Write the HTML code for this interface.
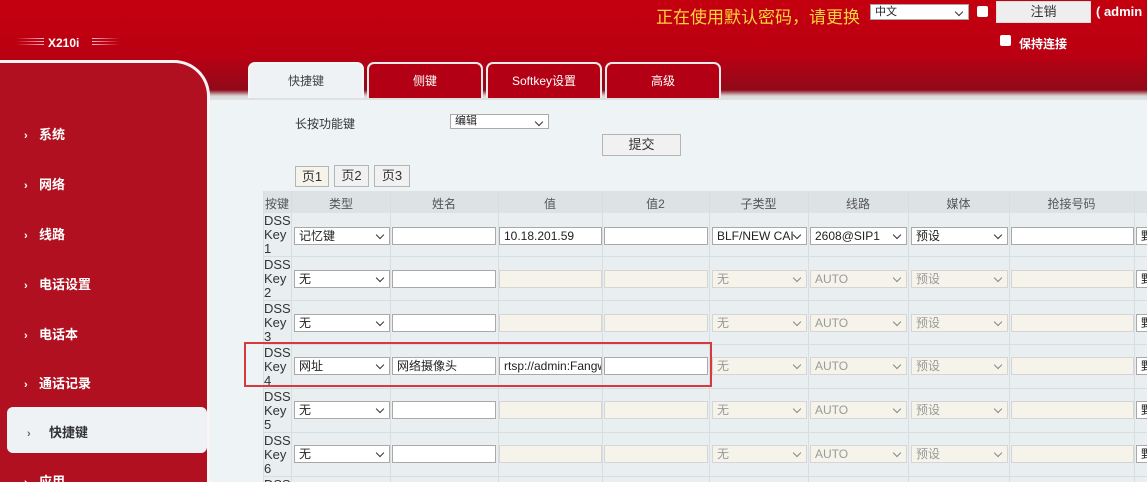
<!DOCTYPE html>
<html><head><meta charset="utf-8"><style>
*{margin:0;padding:0;box-sizing:border-box}
html,body{width:1147px;height:482px;overflow:hidden}
body{position:relative;background:#eef3f5;font-family:"Liberation Sans","Noto Sans CJK SC",sans-serif;font-size:13px;color:#333}
.a{position:absolute}
#hdr{left:0;top:0;width:1147px;height:100px;background:linear-gradient(180deg,#c4000f 0%,#ba0012 55%,#900a1a 90%,#d9d9d9 96%,#dfe3e5 100%)}
.tab{height:36px;border:2px solid #f3e9ea;border-bottom:none;border-radius:7px 7px 0 0;background:#b30014;color:#fff;text-align:center;line-height:34px;font-size:12px}
.side{left:-3px;top:60px;width:213px;height:440px;background:#b0101f;border:3px solid #fbf4f4;border-left:none;border-radius:0 36px 0 0}
.mi{left:24px;color:#fff;font-weight:bold;font-size:13px}
.mi b{display:inline-block;width:15px;font-size:11px}
.sel,.inp{position:absolute;height:18px;border:1px solid #a9a9a9;background:#fff;font-size:12px;line-height:16px;padding-left:4px;color:#222;white-space:nowrap;overflow:hidden}
.sel:after{content:"";position:absolute;right:6px;top:4px;width:5px;height:5px;border-right:1.5px solid #333;border-bottom:1.5px solid #333;transform:rotate(45deg)}
.dis{background:#f5f3ea;border-color:#d5d5d5;color:#999}
.dis:after{border-color:#888}
.vl{position:absolute;top:191px;width:1px;height:291px;background:#d8dde0}
.hl{position:absolute;left:263px;width:884px;height:1px;background:#d8dde0}
.th{position:absolute;top:195px;font-size:12px;color:#555;text-align:center}
.key{position:absolute;left:264px;font-size:13px;line-height:14px;color:#333}
.btn{position:absolute;background:#f1f1f1;border:1px solid #b5b5b5;text-align:center;font-size:13px;color:#333}
.str{position:absolute;top:38px;width:28px;height:8px;background:repeating-linear-gradient(180deg,rgba(255,255,255,.75) 0 1px,transparent 1px 3px)}
</style></head><body>
<div id="hdr" class="a"></div>
<div class="str" style="left:16px;-webkit-mask:linear-gradient(90deg,transparent,#000);mask:linear-gradient(90deg,transparent,#000)"></div>
<div class="a" style="left:48px;top:36px;color:#fff;font-weight:bold;font-size:12px">X210i</div>
<div class="str" style="left:92px;-webkit-mask:linear-gradient(90deg,#000,transparent);mask:linear-gradient(90deg,#000,transparent)"></div>
<div class="a" style="left:656px;top:3px;color:#ffd23c;font-size:17px">正在使用默认密码，请更换</div>
<div class="sel" style="left:870px;top:4px;width:99px;height:16px;font-size:11px;line-height:14px">中文</div>
<div class="a" style="left:977px;top:6px;width:11px;height:11px;background:#fff;border-radius:2px"></div>
<div class="btn" style="left:996px;top:1px;width:95px;height:22px;line-height:20px;background:#eeeeee;border-color:#ddd">注销</div>
<div class="a" style="left:1096px;top:4px;color:#fff;font-weight:bold;font-size:13px">( admin</div>
<div class="a" style="left:1000px;top:35px;width:11px;height:11px;background:#fff;border-radius:2px"></div>
<div class="a" style="left:1019px;top:35px;color:#fff;font-weight:bold;font-size:12px">保持连接</div>

<div class="a tab" style="left:248px;top:62px;width:116px;background:#eef2f4;color:#444;border-color:#f6f6f6">快捷键</div>
<div class="a tab" style="left:367px;top:62px;width:116px">侧键</div>
<div class="a tab" style="left:486px;top:62px;width:116px">Softkey设置</div>
<div class="a tab" style="left:605px;top:62px;width:116px">高级</div>

<div class="a side"></div>
<div class="a mi" style="top:124px"><b>›</b>系统</div>
<div class="a mi" style="top:174px"><b>›</b>网络</div>
<div class="a mi" style="top:224px"><b>›</b>线路</div>
<div class="a mi" style="top:274px"><b>›</b>电话设置</div>
<div class="a mi" style="top:324px"><b>›</b>电话本</div>
<div class="a mi" style="top:373px"><b>›</b>通话记录</div>
<div class="a" style="left:7px;top:407px;width:200px;height:46px;background:#eef2f5;border-radius:6px"></div>
<div class="a mi" style="top:422px;left:27px;color:#333"><b style="width:22px;color:#666">›</b>快捷键</div>
<div class="a mi" style="top:471px"><b>›</b>应用</div>

<div class="a" style="left:295px;top:115px;font-size:12px">长按功能键</div>
<div class="sel" style="left:450px;top:114px;width:99px;height:15px;font-size:11px;line-height:13px">编辑</div>
<div class="btn" style="left:602px;top:134px;width:79px;height:22px;line-height:20px">提交</div>
<div class="btn" style="left:295px;top:166px;width:34px;height:21px;line-height:19px;background:#f6f4ea">页1</div>
<div class="btn" style="left:334px;top:165px;width:35px;height:22px;line-height:20px">页2</div>
<div class="btn" style="left:374px;top:165px;width:36px;height:22px;line-height:20px">页3</div>

<div class="a" style="left:263px;top:191px;width:884px;height:22px;background:#dde2e4"></div>
<div class="a" style="left:263px;top:213px;width:884px;height:269px;background:#e9eef0"></div>
<div class="vl" style="left:263px"></div><div class="vl" style="left:291px"></div><div class="vl" style="left:390px"></div><div class="vl" style="left:498px"></div><div class="vl" style="left:602px"></div><div class="vl" style="left:709px"></div><div class="vl" style="left:808px"></div><div class="vl" style="left:908px"></div><div class="vl" style="left:1009px"></div><div class="vl" style="left:1134px"></div>
<div class="hl" style="top:256px"></div><div class="hl" style="top:300px"></div><div class="hl" style="top:344px"></div><div class="hl" style="top:388px"></div><div class="hl" style="top:432px"></div><div class="hl" style="top:476px"></div>
<div class="th" style="left:265px">按键</div>
<div class="th" style="left:292px;width:98px">类型</div>
<div class="th" style="left:390px;width:108px">姓名</div>
<div class="th" style="left:498px;width:104px">值</div>
<div class="th" style="left:602px;width:107px">值2</div>
<div class="th" style="left:709px;width:99px">子类型</div>
<div class="th" style="left:808px;width:100px">线路</div>
<div class="th" style="left:908px;width:101px">媒体</div>
<div class="th" style="left:1009px;width:125px">抢接号码</div>

<div class="key" style="top:214px">DSS<br>Key<br>1</div>
<div class="sel" style="left:294px;top:227px;width:96px">记忆键</div>
<div class="inp" style="left:392px;top:227px;width:104px"></div>
<div class="inp" style="left:499px;top:227px;width:103px">10.18.201.59</div>
<div class="inp" style="left:604px;top:227px;width:104px"></div>
<div class="sel" style="left:712px;top:227px;width:95px">BLF/NEW CAI</div>
<div class="sel" style="left:810px;top:227px;width:97px">2608@SIP1</div>
<div class="sel" style="left:911px;top:227px;width:97px">预设</div>
<div class="inp" style="left:1011px;top:227px;width:123px"></div>
<div class="inp" style="left:1136px;top:227px;width:20px">野</div>

<div class="key" style="top:258px">DSS<br>Key<br>2</div>
<div class="sel" style="left:294px;top:270px;width:96px">无</div>
<div class="inp" style="left:392px;top:270px;width:104px"></div>
<div class="inp dis" style="left:499px;top:270px;width:103px"></div>
<div class="inp dis" style="left:604px;top:270px;width:104px"></div>
<div class="sel dis" style="left:712px;top:270px;width:95px">无</div>
<div class="sel dis" style="left:810px;top:270px;width:97px">AUTO</div>
<div class="sel dis" style="left:911px;top:270px;width:97px">预设</div>
<div class="inp dis" style="left:1011px;top:270px;width:123px"></div>
<div class="inp" style="left:1136px;top:270px;width:20px">野</div>

<div class="key" style="top:302px">DSS<br>Key<br>3</div>
<div class="sel" style="left:294px;top:314px;width:96px">无</div>
<div class="inp" style="left:392px;top:314px;width:104px"></div>
<div class="inp dis" style="left:499px;top:314px;width:103px"></div>
<div class="inp dis" style="left:604px;top:314px;width:104px"></div>
<div class="sel dis" style="left:712px;top:314px;width:95px">无</div>
<div class="sel dis" style="left:810px;top:314px;width:97px">AUTO</div>
<div class="sel dis" style="left:911px;top:314px;width:97px">预设</div>
<div class="inp dis" style="left:1011px;top:314px;width:123px"></div>
<div class="inp" style="left:1136px;top:314px;width:20px">野</div>

<div class="key" style="top:346px">DSS<br>Key<br>4</div>
<div class="sel" style="left:294px;top:357px;width:96px">网址</div>
<div class="inp" style="left:392px;top:357px;width:104px">网络摄像头</div>
<div class="inp" style="left:499px;top:357px;width:103px">rtsp://admin:Fangw</div>
<div class="inp" style="left:604px;top:357px;width:104px"></div>
<div class="sel dis" style="left:712px;top:357px;width:95px">无</div>
<div class="sel dis" style="left:810px;top:357px;width:97px">AUTO</div>
<div class="sel dis" style="left:911px;top:357px;width:97px">预设</div>
<div class="inp dis" style="left:1011px;top:357px;width:123px"></div>
<div class="inp" style="left:1136px;top:357px;width:20px">野</div>
<div class="a" style="left:244px;top:342px;width:468px;height:45px;border:2px solid #d8393e"></div>

<div class="key" style="top:390px">DSS<br>Key<br>5</div>
<div class="sel" style="left:294px;top:401px;width:96px">无</div>
<div class="inp" style="left:392px;top:401px;width:104px"></div>
<div class="inp dis" style="left:499px;top:401px;width:103px"></div>
<div class="inp dis" style="left:604px;top:401px;width:104px"></div>
<div class="sel dis" style="left:712px;top:401px;width:95px">无</div>
<div class="sel dis" style="left:810px;top:401px;width:97px">AUTO</div>
<div class="sel dis" style="left:911px;top:401px;width:97px">预设</div>
<div class="inp dis" style="left:1011px;top:401px;width:123px"></div>
<div class="inp" style="left:1136px;top:401px;width:20px">野</div>

<div class="key" style="top:434px">DSS<br>Key<br>6</div>
<div class="sel" style="left:294px;top:445px;width:96px">无</div>
<div class="inp" style="left:392px;top:445px;width:104px"></div>
<div class="inp dis" style="left:499px;top:445px;width:103px"></div>
<div class="inp dis" style="left:604px;top:445px;width:104px"></div>
<div class="sel dis" style="left:712px;top:445px;width:95px">无</div>
<div class="sel dis" style="left:810px;top:445px;width:97px">AUTO</div>
<div class="sel dis" style="left:911px;top:445px;width:97px">预设</div>
<div class="inp dis" style="left:1011px;top:445px;width:123px"></div>
<div class="inp" style="left:1136px;top:445px;width:20px">野</div>
<div class="key" style="top:478px">DSS</div>
</body></html>
